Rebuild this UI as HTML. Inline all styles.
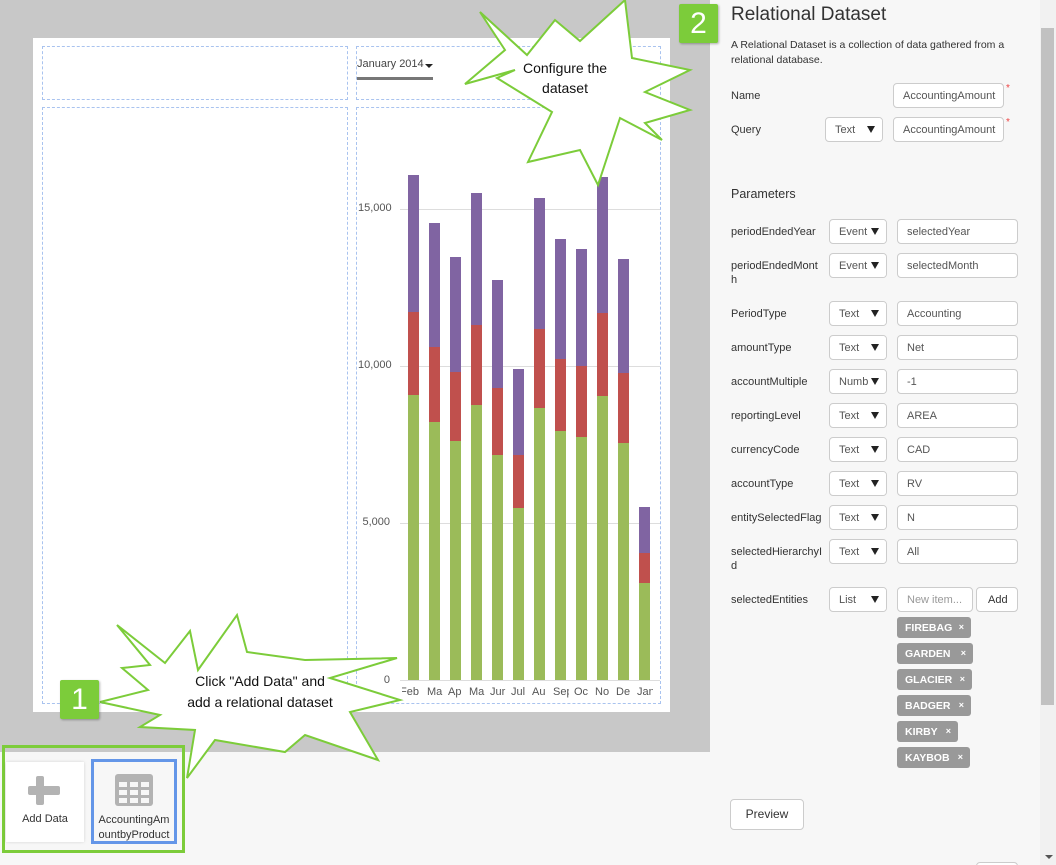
<!DOCTYPE html>
<html><head><meta charset="utf-8"><style>
*{box-sizing:border-box;margin:0;padding:0}
html,body{width:1056px;height:865px;overflow:hidden}
body{position:relative;background:#f7f7f7;font-family:"Liberation Sans",sans-serif;color:#333}
.a{position:absolute}
.dash{position:absolute;border:1px dashed #a9c3ef}
.lbl{position:absolute;left:731px;font-size:11px;color:#333;line-height:14px;width:95px}
.sel{position:absolute;height:25px;border:1px solid #ccc;border-radius:4px;background:#fff;font-size:11px;color:#555;padding:6px 0 0 9px;overflow:hidden;white-space:nowrap}
.sel i{position:absolute;right:0;top:0;width:18px;height:23px;background:#fff}
.sel i:after{content:"";position:absolute;left:3px;top:8px;border-left:4px solid transparent;border-right:4px solid transparent;border-top:7px solid #222}
.inp{position:absolute;height:25px;border:1px solid #ccc;border-radius:4px;background:#fff;font-size:11px;color:#555;padding:6px 0 0 9px;white-space:nowrap;overflow:hidden}
.tag{position:absolute;left:897px;height:21px;background:#999;color:#fff;border-radius:3px;font-size:10.5px;font-weight:bold;padding:5px 0 0 8px}
.tag span{position:absolute;right:7px;top:5px;font-size:9px}
.yl{position:absolute;font-size:11px;color:#555;text-align:right;width:32px;left:358px}
.gl{position:absolute;left:400px;width:260px;height:1px;background:#ddd}
.xl{position:absolute;top:686px;font-size:11px;color:#555;width:16px;overflow:hidden;white-space:nowrap}
.badge{position:absolute;width:39px;height:39px;background:#7ccc3a;color:#fff;font-size:30px;text-align:center;line-height:39px;border-radius:2px;box-shadow:1px 1px 2px rgba(0,0,0,.3)}
</style></head><body>
<div class="a" style="left:0;top:0;width:710px;height:752px;background:#c8c8c8"></div>
<div class="a" style="left:33px;top:38px;width:637px;height:674px;background:#fff"></div>
<div class="dash" style="left:42px;top:46px;width:306px;height:54px"></div>
<div class="dash" style="left:356px;top:46px;width:305px;height:54px"></div>
<div class="dash" style="left:42px;top:107px;width:306px;height:597px"></div>
<div class="dash" style="left:356px;top:107px;width:305px;height:597px"></div>
<div class="a" style="left:357px;top:58px;font-size:11px;color:#444">January 2014</div>
<div class="a" style="left:425px;top:64px;border-left:4px solid transparent;border-right:4px solid transparent;border-top:4px solid #222"></div>
<div class="a" style="left:357px;top:77px;width:76px;height:3px;background:#777"></div>

<div class="gl" style="top:209px"></div><div class="gl" style="top:366px"></div><div class="gl" style="top:523px"></div><div class="gl" style="top:680px"></div>
<div class="yl" style="top:202px">15,000</div><div class="yl" style="top:359px">10,000</div><div class="yl" style="top:516px">5,000</div><div class="yl" style="top:674px">0</div>

<svg class="a" style="left:0;top:0" width="710" height="712">
<g id="bars"></g>
</svg>
<div id="xl"></div>

<svg class="a" style="left:0;top:0" width="1056" height="865">
<polygon fill="#fff" stroke="#7ccc3a" stroke-width="2" points="480,12 527,55 555,20 580,41 625,0 632,58 690,70 645,92 690,110 645,123 662,140 620,118 598,185 580,150 528,162 552,112 497,78 515,70 465,84 505,50"/>
<polygon fill="#fff" stroke="#7ccc3a" stroke-width="2" points="117,625 165,663 190,631 198,670 237,615 247,652 305,660 397,658 330,678 400,700 350,712 378,760 305,735 285,752 215,740 187,778 195,730 140,727 160,715 100,702 148,690 122,668 150,665"/>
</svg>
<div class="a" style="left:510px;top:58px;width:110px;text-align:center;font-size:14px;line-height:20px;color:#111">Configure the<br>dataset</div>
<div class="a" style="left:160px;top:671px;width:200px;text-align:center;font-size:14px;line-height:21px;color:#111;white-space:nowrap">Click "Add Data" and<br>add a relational dataset</div>
<div class="badge" style="left:60px;top:680px">1</div>
<div class="badge" style="left:679px;top:4px">2</div>

<div class="a" style="left:2px;top:745px;width:183px;height:108px;border:3px solid #7ccc3a"></div>
<div class="a" style="left:6px;top:762px;width:78px;height:80px;background:#fff;box-shadow:0 0 3px rgba(0,0,0,.15)"></div>
<div class="a" style="left:36px;top:776px;width:8px;height:29px;background:#b3b3b3;border-radius:2px"></div>
<div class="a" style="left:28px;top:786px;width:32px;height:9px;background:#b3b3b3;border-radius:2px"></div>
<div class="a" style="left:6px;top:813px;width:78px;text-align:center;font-size:11px;color:#333">Add Data</div>
<div class="a" style="left:91px;top:759px;width:86px;height:85px;border:3px solid #6496e8;background:#f7f7f7"></div>
<svg class="a" style="left:115px;top:774px" width="38" height="32"><rect width="38" height="32" rx="3" fill="#b3b3b3"/><g fill="#f7f7f7"><rect x="4" y="8" width="8" height="5"/><rect x="15" y="8" width="8" height="5"/><rect x="26" y="8" width="8" height="5"/><rect x="4" y="16" width="8" height="5"/><rect x="15" y="16" width="8" height="5"/><rect x="26" y="16" width="8" height="5"/><rect x="4" y="24" width="8" height="5"/><rect x="15" y="24" width="8" height="5"/><rect x="26" y="24" width="8" height="5"/></g></svg>
<div class="a" style="left:94px;top:813px;width:80px;text-align:center;font-size:11px;line-height:15px;color:#333">AccountingAm ountbyProduct</div>

<div class="a" style="left:1040px;top:0;width:16px;height:865px;background:#f1f1f1"></div>
<div class="a" style="left:1041px;top:28px;width:13px;height:677px;background:#c1c1c1"></div>
<div class="a" style="left:1045px;top:855px;border-left:4px solid transparent;border-right:4px solid transparent;border-top:4px solid #555"></div>

<div class="a" style="left:731px;top:4px;font-size:19px;color:#333">Relational Dataset</div>
<div class="a" style="left:731px;top:38px;width:300px;font-size:10.5px;line-height:15px;color:#333">A Relational Dataset is a collection of data gathered from a relational database.</div>
<div class="lbl" style="top:89px">Name</div>
<div class="inp" style="left:893px;top:83px;width:111px">AccountingAmount</div>
<div class="a" style="left:1006px;top:83px;color:#e44;font-size:10px">*</div>
<div class="lbl" style="top:123px">Query</div>
<div class="sel" style="left:825px;top:117px;width:58px">Text<i></i></div>
<div class="inp" style="left:893px;top:117px;width:111px">AccountingAmount</div>
<div class="a" style="left:1006px;top:117px;color:#e44;font-size:10px">*</div>
<div class="a" style="left:731px;top:187px;font-size:12.5px;color:#333">Parameters</div>
<div id="rows"></div>
<div class="tag" style="top:617px;width:74px">FIREBAG<span>×</span></div>
<div class="tag" style="top:643px;width:76px">GARDEN<span>×</span></div>
<div class="tag" style="top:669px;width:75px">GLACIER<span>×</span></div>
<div class="tag" style="top:695px;width:74px">BADGER<span>×</span></div>
<div class="tag" style="top:721px;width:61px">KIRBY<span>×</span></div>
<div class="tag" style="top:747px;width:73px">KAYBOB<span>×</span></div>
<div class="a" style="left:730px;top:799px;width:74px;height:31px;border:1px solid #ccc;border-radius:4px;background:#fff;font-size:12px;text-align:center;line-height:29px;color:#333">Preview</div>
<div class="a" style="left:976px;top:862px;width:42px;height:10px;border:1px solid #ccc;border-radius:4px;background:#fff"></div>
<script>
var b=[[175,312,395],[223,347,422],[257,372,441],[193,325,405],[280,388,455],[369,455,508],[198,329,408],[239,359,431],[249,366,437],[177,313,396],[259,373,443],[507,553,583]];
var s='';b.forEach(function(v,i){var x=408+i*21;
s+='<rect x="'+x+'" y="'+v[0]+'" width="11" height="'+(v[1]-v[0])+'" fill="#8064a2"/>';
s+='<rect x="'+x+'" y="'+v[1]+'" width="11" height="'+(v[2]-v[1])+'" fill="#c0504d"/>';
s+='<rect x="'+x+'" y="'+v[2]+'" width="11" height="'+(680-v[2])+'" fill="#9bbb59"/>';});
document.getElementById('bars').innerHTML=s;
var m=['Feb','Ma','Ap','Ma','Jur','Jul','Au','Sep','Oc','No','De','Jan'],h='';
m.forEach(function(t,i){h+='<div class="xl" style="left:'+(i==0?402:(406+i*21))+'px;'+(i==0?'direction:rtl;width:17px':'')+'">'+t+'</div>';});
document.getElementById('xl').innerHTML=h;
var r=[['periodEndedYear','Event','selectedYear',231],['periodEndedMont h','Event','selectedMonth',265],['PeriodType','Text','Accounting',313],['amountType','Text','Net',347],['accountMultiple','Numb','-1',381],['reportingLevel','Text','AREA',415],['currencyCode','Text','CAD',449],['accountType','Text','RV',483],['entitySelectedFlag','Text','N',517],['selectedHierarchyI d','Text','All',551],['selectedEntities','List','',599]];
var o='';r.forEach(function(v){var t=v[3]-12;
o+='<div class="lbl" style="top:'+(t+6)+'px">'+v[0]+'</div><div class="sel" style="left:829px;top:'+t+'px;width:58px">'+v[1]+'<i></i></div>';
if(v[2])o+='<div class="inp" style="left:897px;top:'+t+'px;width:121px">'+v[2]+'</div>';
else o+='<div class="inp" style="left:897px;top:'+t+'px;width:76px;color:#999">New item...</div><div class="inp" style="left:976px;top:'+t+'px;width:42px;color:#333;padding-left:11px">Add</div>';});
document.getElementById('rows').innerHTML=o;
</script>
</body></html>
